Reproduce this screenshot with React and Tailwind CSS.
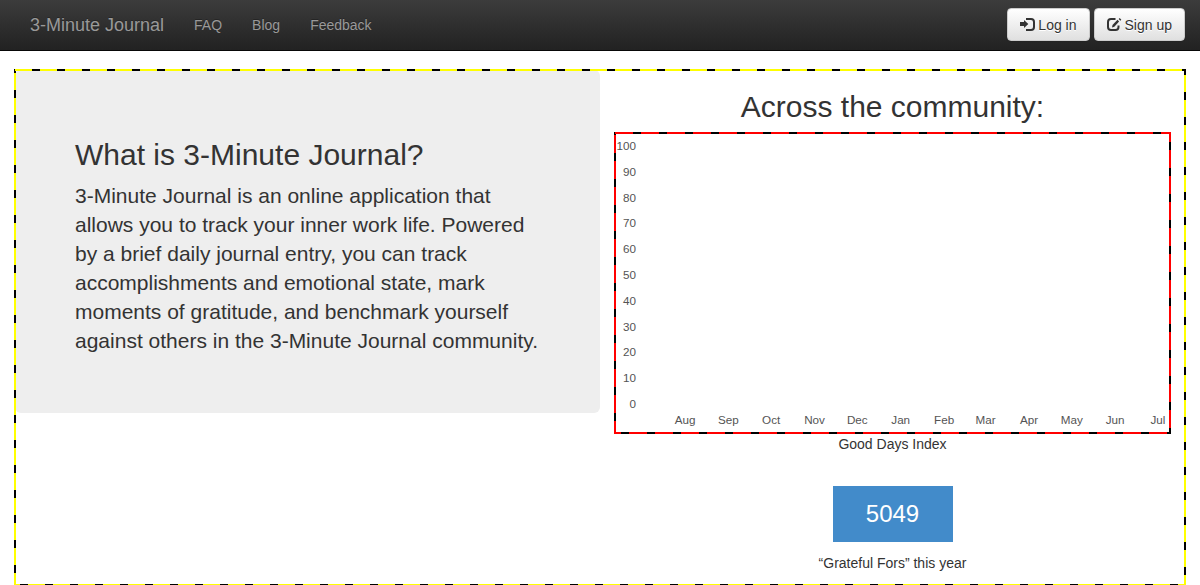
import React from "react";

const navLinks = ["FAQ", "Blog", "Feedback"];

const scale = [100, 90, 80, 70, 60, 50, 40, 30, 20, 10, 0];

// Each month with the number of days until the next tick.
const months = [
  ["Aug", 31],
  ["Sep", 30],
  ["Oct", 31],
  ["Nov", 30],
  ["Dec", 31],
  ["Jan", 31],
  ["Feb", 28],
  ["Mar", 31],
  ["Apr", 30],
  ["May", 31],
  ["Jun", 30],
  ["Jul", 0],
];

const buttonClass =
  "flex cursor-pointer items-center gap-[3px] rounded border border-[#cccccc] bg-linear-to-b from-white to-[#e0e0e0] px-3 pt-[6px] pb-[5px] text-sm leading-5 text-[#333333] [text-shadow:0_1px_0_#fff] shadow-[inset_0_1px_0_rgba(255,255,255,0.15),0_1px_1px_rgba(0,0,0,0.075)]";

function LogInIcon() {
  return (
    <svg className="h-[14px] w-[15px]" viewBox="0 0 15 14" aria-hidden="true">
      <path d="M0 4H4V2L8.300 6 4 10V8H0z" fill="#333" />
      <path
        d="M6 1h5a3 3 0 0 1 3 3v5a3 3 0 0 1-3 3H6"
        fill="none"
        stroke="#333"
        strokeWidth="2"
      />
    </svg>
  );
}

function EditIcon() {
  return (
    <svg className="h-[14px] w-[15px]" viewBox="0 0 15 14" aria-hidden="true">
      <path
        d="M8.500 1H4A3 3 0 0 0 1 4v5a3 3 0 0 0 3 3h4.500a3 3 0 0 0 3-3V7.500"
        fill="none"
        stroke="#333"
        strokeWidth="2"
      />
      <path d="M5 9.500l.5-2.500L10.500 1.800l1.600 1.600L7.300 8.700z" fill="#333" />
      <path d="M11.700 1.100l1-1 1.600 1.600-1 1z" fill="#333" />
    </svg>
  );
}

function OuterFrame() {
  return (
    <div aria-hidden="true" className="pointer-events-none absolute -inset-px">
      <div className="absolute inset-y-0 left-0 w-[2px] bg-[repeating-linear-gradient(to_bottom,#000_0_4px,#ff0_4px_21px,#000_21px_25px)]" />
      <div className="absolute inset-x-0 top-0 h-[2px] bg-[repeating-linear-gradient(to_right,#000_0_1px,#ff0_1px_18px,#000_18px_25px)]" />
      <div className="absolute inset-x-0 bottom-0 h-[2px] bg-[repeating-linear-gradient(to_right,#ff0_0_6px,#000_6px_14px,#ff0_14px_25px)]" />
      <div className="absolute inset-y-0 right-0 w-[2px] bg-[repeating-linear-gradient(to_bottom,#000_0_6px,#ff0_6px_23px,#000_23px_25px)]" />
    </div>
  );
}

function ChartFrame() {
  return (
    <div aria-hidden="true" className="pointer-events-none absolute -inset-px">
      <div className="absolute inset-y-0 left-0 w-[2px] bg-[repeating-linear-gradient(to_bottom,#000_0_3px,#f00_3px_21px,#000_21px_26px)]" />
      <div className="absolute inset-x-0 top-0 h-[2px] bg-[repeating-linear-gradient(to_right,#000_0_1px,#f00_1px_19px,#000_19px_26px)]" />
      <div className="absolute inset-x-0 bottom-0 h-[2px] bg-[repeating-linear-gradient(to_right,#f00_0_7px,#000_7px_15px,#f00_15px_26px)]" />
      <div className="absolute inset-y-0 right-0 w-[2px] bg-[repeating-linear-gradient(to_bottom,#f00_0_10px,#000_10px_18px,#f00_18px_26px)]" />
    </div>
  );
}

function Chart() {
  return (
    <figure>
      <div className="relative flex h-[300px] flex-col pt-[5px] pb-[5px] text-[#545454] [font-size:smaller]">
        <ol className="flex w-[21px] grow flex-col justify-between text-right">
          {scale.map((n) => (
            <li key={n} className="flex justify-end leading-4">
              {n}
            </li>
          ))}
        </ol>
        <ol className="flex pl-[58px]">
          {months.map(([name, days]) => (
            <li key={name} className="basis-6 leading-4" style={{ flexGrow: days }}>
              <span className="block w-6 text-center">{name}</span>
            </li>
          ))}
        </ol>
        <ChartFrame />
      </div>
      <figcaption className="pt-px text-center">Good Days Index</figcaption>
    </figure>
  );
}

export default function App() {
  return (
    <div className="bg-white font-['Liberation_Sans',Arial,sans-serif] text-sm leading-5 text-[#333333]">
      <header className="flex h-[51px] items-center justify-between border-b border-[#080808] bg-linear-to-b from-[#3c3c3c] to-[#222222] px-[15px]">
        <nav className="flex items-center text-[#999999] [text-shadow:0_-1px_0_rgba(0,0,0,0.25)]">
          <a href="#" className="px-[15px] text-lg leading-5">
            3-Minute Journal
          </a>
          {navLinks.map((label) => (
            <a key={label} href="#" className="px-[15px]">
              {label}
            </a>
          ))}
        </nav>
        <div className="flex gap-1 self-start pt-2">
          <button type="button" className={buttonClass}>
            <LogInIcon />
            Log in
          </button>
          <button type="button" className={buttonClass}>
            <EditIcon />
            Sign up
          </button>
        </div>
      </header>

      <main className="relative mx-[15px] mt-[19px] grid grid-cols-2 items-start pb-3">
        <section className="rounded-md bg-[#eeeeee] px-[60px] pt-[68px] pb-[58px]">
          <h2 className="mb-[10px] text-[30px] leading-[33px]">What is 3-Minute Journal?</h2>
          <p className="text-[21px] leading-[29px]">
            3-Minute Journal is an online application that allows you to track your inner work
            life. Powered by a brief daily journal entry, you can track accomplishments and
            emotional state, mark moments of gratitude, and benchmark yourself against others in
            the 3-Minute Journal community.
          </p>
        </section>
        <section className="px-[15px] pt-5">
          <h2 className="mb-[10px] text-center text-[30px] leading-[33px]">
            Across the community:
          </h2>
          <Chart />
          <div className="mt-8 flex flex-col items-center gap-[11px]">
            <div className="flex h-14 w-[120px] items-center justify-center bg-[#428bca] text-2xl text-white">
              5049
            </div>
            <p>“Grateful Fors” this year</p>
          </div>
        </section>
        <OuterFrame />
      </main>
    </div>
  );
}
